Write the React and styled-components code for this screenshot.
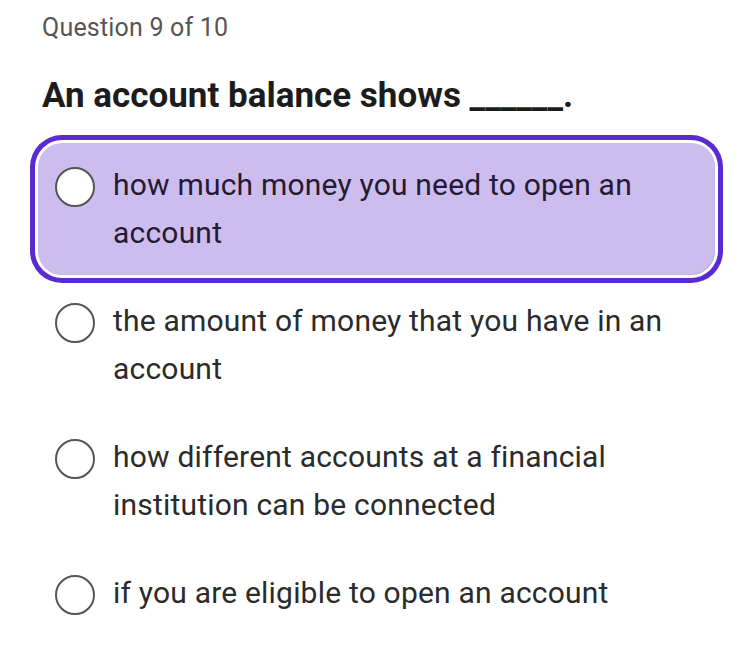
import styled, { createGlobalStyle } from 'styled-components';

const GlobalStyle = createGlobalStyle`
  body {
    margin: 0;
    background: #ffffff;
    font-family: Roboto, "Noto Sans", sans-serif;
  }
`;

const options = [
  'how much money you need to open an account',
  'the amount of money that you have in an account',
  'how different accounts at a financial institution can be connected',
  'if you are eligible to open an account',
];

const Page = styled.div`
  padding: 12px 33px 20px 38px;
`;

const Counter = styled.div`
  margin-left: 4px;
  font-size: 25px;
  line-height: 32px;
  letter-spacing: 0.2px;
  color: #555555;
  font-weight: 400;
`;

const Question = styled.h1`
  margin: 32px 0 27px 4px;
  font-size: 35px;
  line-height: 40px;
  font-weight: 700;
  color: #1c1c1c;
  letter-spacing: 0;
`;

const List = styled.div`
  display: flex;
  flex-direction: column;
  gap: 4px;
`;

const Option = styled.label`
  display: flex;
  align-items: flex-start;
  gap: 18px;
  padding: 18px 24px 18px 17px;
  border-radius: 24px;
  background: ${(p) => (p.$selected ? '#cdbdef' : 'transparent')};
  box-shadow: ${(p) =>
    p.$selected
      ? 'inset -1px -1px 0 #c2b8d8, 0 0 0 3px #ffffff, 0 0 0 8px #5a2bcf'
      : 'none'};
  cursor: pointer;
`;

const Radio = styled.span`
  flex: none;
  box-sizing: border-box;
  width: 40px;
  height: 40px;
  margin-top: 6px;
  border-radius: 50%;
  border: 2px solid #555555;
  background: #ffffff;
`;

const OptionText = styled.span`
  font-size: 30px;
  line-height: 48px;
  letter-spacing: 0.2px;
  color: ${(p) => (p.$selected ? '#241a33' : '#2b2b2b')};
`;

export default function App() {
  return (
    <>
      <GlobalStyle />
      <Page>
        <Counter>Question 9 of 10</Counter>
        <Question>An account balance shows ______.</Question>
        <List>
          {options.map((text, i) => (
            <Option key={text} $selected={i === 0}>
              <Radio />
              <OptionText $selected={i === 0}>{text}</OptionText>
            </Option>
          ))}
        </List>
      </Page>
    </>
  );
}
